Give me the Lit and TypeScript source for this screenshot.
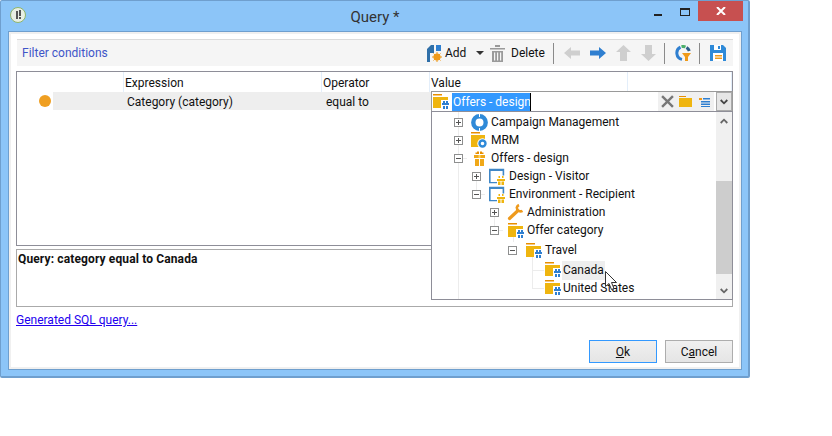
import { LitElement, css, html, svg } from "lit";
import { customElement } from "lit/decorators.js";

const FONT_BLUE = "#2f7fd0";

// Icons ---------------------------------------------------------------

const gift = (x: number, y: number, c = "#2f7fd0") => svg`
  <path fill="#fff" d="M${x - 1} ${y - 1}h9v10h-9z" />
  <path fill=${c} d="M${x} ${y + 2}h7v2h-7zM${x + 1} ${y + 5}h2v3h-2zM${x + 4} ${y + 5}h2v3h-2zM${x + 1} ${y}h2v2h-2zM${x + 4} ${y}h2v2h-2z" />
`;

const folderIcon = svg`<svg class="ico folder" viewBox="0 0 17 16" width="17" height="16">
  <path fill="#e88f00" d="M0 0h9v1.500H0z" />
  <path fill="#efb50f" d="M0 3h15v11H0z" />
  ${gift(9, 7)}
</svg>`;

const icons: Record<string, unknown> = {
  campaign: svg`<svg class="ico" viewBox="0 0 17 17" width="17" height="17">
    <circle cx="8.500" cy="8.500" r="6.200" fill="none" stroke="#2f8ad8" stroke-width="4.400" />
    <path stroke="#fff" stroke-width="1" d="M8.500 0v3M8.500 14v3" />
  </svg>`,
  mrm: svg`<svg class="ico" viewBox="0 0 17 17" width="17" height="17">
    <path fill="#e88f00" d="M0 0h9v1.500H0z" />
    <path fill="#efb50f" d="M0 3h14v12H0z" />
    <circle cx="11.500" cy="11.500" r="5.200" fill="#fff" />
    <circle cx="11.500" cy="11.500" r="3" fill="none" stroke="#2f8ad8" stroke-width="2.400" />
  </svg>`,
  gift: svg`<svg class="ico" viewBox="0 0 17 17" width="17" height="17">
    <path fill="#f0a818" d="M3 5h11v3H3zM4 9h4v7H4zM9 9h4v7H9z" />
    <path fill="#e88f00" d="M6 1.500h2V4H6zM9 1.500h2V4H9zM4.500 2.500H7V4H4.500zM10 2.500h2.500V4H10z" />
    <path fill="#ffd766" d="M7.500 5h2v3h-2z" />
  </svg>`,
  screen: svg`<svg class="ico" viewBox="0 0 17 17" width="17" height="17">
    <path fill="none" stroke="#3f87c7" stroke-width="1.600" d="M.8 14.400V1.600h13.600v6" />
    <path fill="#3f87c7" d="M0 1h15v2H0zM0 14h8v1.300H0z" />
    <path fill="#efb50f" d="M8 11h8v2H8zM9 13.500h2.500V17H9zM12.500 13.500H15V17h-2.500zM9.500 8H11v2H9.500zM13 8h1.500v2H13z" />
  </svg>`,
  wrench: svg`<svg class="ico" viewBox="0 0 18 17" width="18" height="17">
    <path fill="none" stroke="#ee9a1d" stroke-width="3.200" stroke-linecap="round" d="M2.500 14.500 L10.500 7" />
    <path fill="none" stroke="#ee9a1d" stroke-width="2.600" d="M15.500 6.800A3.800 3.800 0 0 1 9.800 3.500 3.800 3.800 0 0 1 12 1" />
  </svg>`,
  folder: folderIcon,
};

// Data ----------------------------------------------------------------

interface TreeRow {
  label: string;
  level: number;
  icon: string;
  toggle?: "plus" | "minus";
  height?: number;
  selected?: boolean;
}

const TREE: TreeRow[] = [
  { label: "Campaign Management", level: 0, icon: "campaign", toggle: "plus" },
  { label: "MRM", level: 0, icon: "mrm", toggle: "plus" },
  { label: "Offers - design", level: 0, icon: "gift", toggle: "minus" },
  { label: "Design - Visitor", level: 1, icon: "screen", toggle: "plus" },
  { label: "Environment - Recipient", level: 1, icon: "screen", toggle: "minus" },
  { label: "Administration", level: 2, icon: "wrench", toggle: "plus" },
  { label: "Offer category", level: 2, icon: "folder", toggle: "minus", height: 19 },
  { label: "Travel", level: 3, icon: "folder", toggle: "minus", height: 21 },
  { label: "Canada", level: 4, icon: "folder", selected: true },
  { label: "United States", level: 4, icon: "folder" },
];

// guide lines of the tree: x, y, width, height relative to the list
const GUIDES = [
  [26, 0, 1, 187],
  [44, 60, 1, 24],
  [62, 96, 1, 24],
  [81, 124, 1, 6],
  [100, 140, 1, 36],
  [100, 158, 12, 1],
  [100, 176, 12, 1],
  [31, 46, 4, 1],
  [49, 82, 4, 1],
  [67, 118, 4, 1],
];

@customElement("app-root")
export class AppRoot extends LitElement {
  render() {
    return html`
      <div class="window">
        <div class="titlebar">
          <span class="app-icon">
            <svg viewBox="0 0 16 16" width="16" height="16">
              <circle cx="8" cy="8" r="7.500" fill="#e8efe4" stroke="#8fb56a" />
              <path fill="#555" d="M6 4h2v8H6zM9 3h2v6H9zM9 10h2v2H9z" />
            </svg>
          </span>
          <span class="title">Query *</span>
          <span class="win-min"></span>
          <span class="win-max"></span>
          <span class="win-close">
            <svg viewBox="0 0 10 8" width="10" height="8">
              <path stroke="#fff" stroke-width="2" d="M1 0l8 8M9 0L1 8" />
            </svg>
          </span>
        </div>
        <div class="client">
          ${this.renderToolbar()}
          ${this.renderTable()}
          <div class="query">Query: category equal to Canada</div>
          <a class="sql">Generated SQL query...</a>
          <div class="buttons">
            <button class="default"><u>O</u>k</button>
            <button>C<u>a</u>ncel</button>
          </div>
        </div>
      </div>
    `;
  }

  renderToolbar() {
    return html`
      <div class="toolbar">
        <span class="filter">Filter conditions</span>
        <span class="tools">
          <svg class="t-add" viewBox="0 0 15 17" width="15" height="17">
            <path fill="#2f6fa8" d="M0 4l4-4h3v8H3v9H0z" />
            <path fill="#2f7fd0" d="M9 0h5v6H9z" />
            <circle cx="10" cy="12" r="3.600" fill="#ef9a1a" />
            <path stroke="#ef9a1a" stroke-width="1" d="M10 7v10M5 12h10M6.500 8.500l7 7M13.500 8.500l-7 7" />
          </svg>
          <span class="t-label add-label">Add</span>
          <span class="caret"></span>
          <svg class="t-trash" viewBox="0 0 15 17" width="15" height="17">
            <path fill="#9a9a9a" d="M0 3h15v1.500H0zM5 0h5v2H5zM2 6h11v11H2z" />
            <path fill="#f5f5f5" d="M4 7.500h1.200v8H4zM7 7.500h1.200v8H7zM10 7.500h1.200v8H10z" />
          </svg>
          <span class="t-label delete-label">Delete</span>
          <span class="sep s1"></span>
          <svg class="t-arrow" viewBox="0 0 16 12" width="16" height="12"><path fill="#cfcfcf" d="M7 0v3.500h9v5H7V12L0 6z" /></svg>
          <svg class="t-arrow" viewBox="0 0 16 12" width="16" height="12"><path fill=${FONT_BLUE} d="M9 0v3.500H0v5h9V12l7-6z" /></svg>
          <svg class="t-arrow" viewBox="0 0 15 16" width="15" height="16"><path fill="#cfcfcf" d="M7.500 0L15 7h-4v9H4V7H0z" /></svg>
          <svg class="t-arrow" viewBox="0 0 15 16" width="15" height="16"><path fill="#cfcfcf" d="M7.500 16L15 9h-4V0H4v9H0z" /></svg>
          <span class="sep s2"></span>
          <svg class="t-chart" viewBox="0 0 16 16" width="16" height="16">
            <path fill="none" stroke="#2f7fd0" stroke-width="3" d="M5.500 2.200A6.500 6.500 0 0 0 7 14.400" />
            <path fill="none" stroke="#4caf6a" stroke-width="3" d="M6.500 1.600a6.500 6.500 0 0 1 4 .4" />
            <path fill="none" stroke="#2c5d8a" stroke-width="3" d="M11.500 2.500a6.500 6.500 0 0 1 2.800 3.500" />
            <path fill="#ef9a1a" d="M7 8h9l-3 4v4h-3v-4z" />
          </svg>
          <span class="sep s3"></span>
          <svg class="t-save" viewBox="0 0 16 16" width="16" height="16">
            <path fill="#2f8ad8" d="M0 0h13l3 3v13H0z" />
            <path fill="#fff" d="M4 0h7v5H4z" />
            <path fill="#2f8ad8" d="M8 1h2v3H8z" />
            <path fill="#fff" d="M3 8h10v8H3z" />
            <path fill="#ef9a1a" d="M5 10h7v1.500H5zM5 12.500h7V14H5z" />
          </svg>
        </span>
      </div>
    `;
  }

  renderTable() {
    return html`
      <div class="table">
        <div class="head">
          <span class="c0"></span>
          <span class="c1">Expression</span>
          <span class="c2">Operator</span>
          <span class="c3">Value</span>
          <span class="c4"></span>
        </div>
        <div class="row">
          <span class="dot"></span>
          <span class="cell expr">Category (category)</span>
          <span class="cell op">equal to</span>
        </div>
        ${this.renderCombo()}
      </div>
    `;
  }

  renderCombo() {
    return html`
      <div class="combo">
        <span class="combo-icon">${folderIcon}</span>
        <span class="input"><span class="sel">Offers - design</span></span>
        <span class="combo-tools">
          <svg viewBox="0 0 12 12" width="13" height="13"><path stroke="#777" stroke-width="2.200" d="M1 1l10 10M11 1L1 11" /></svg>
          <svg viewBox="0 0 13 11" width="13" height="11"><path fill="#e88f00" d="M0 0h7v1H0z" /><path fill="#efb50f" d="M0 2h13v9H0z" /></svg>
          <svg class="list-ico" viewBox="0 0 11 10" width="11" height="10"><path fill="#ef9a1a" d="M0 1h3v2H0z" /><path fill="#2f7fd0" d="M4 1h7v1.500H4zM2 4h9v1.500H2zM2 6.500h9V8H2zM2 9h9v1H2z" /></svg>
        </span>
        <span class="drop">
          <svg viewBox="0 0 8 6" width="8" height="6"><path fill="none" stroke="#444" stroke-width="1.800" d="M.7 1l3.300 3.300L7.300 1" /></svg>
        </span>
      </div>
      <div class="popup">
        <div class="list">
          ${GUIDES.map(
            ([x, y, w, h]) =>
              html`<i class="guide" style="left:${x}px;top:${y}px;width:${w}px;height:${h}px"></i>`,
          )}
          ${TREE.map(
            (r) => html`
              <div
                class="node ${r.toggle ? "" : "leaf"}"
                style="padding-left:${22 + r.level * 18}px;height:${r.height ?? 18}px"
              >
                <span class="toggle">
                  ${r.toggle
                    ? html`<span class="box">
                        <svg viewBox="0 0 7 7" width="7" height="7">
                          <path fill="#555" d="M1 3h5v1H1z" />
                          ${r.toggle === "plus" ? svg`<path fill="#555" d="M3 1h1v5H3z" />` : ""}
                        </svg>
                      </span>`
                    : ""}
                </span>
                <span class="node-icon">${icons[r.icon]}</span>
                <span class="label ${r.selected ? "hover" : ""}">${r.label}</span>
              </div>
            `,
          )}
        </div>
        <div class="scroll">
          <span class="up">
            <svg viewBox="0 0 8 6" width="8" height="6"><path fill="none" stroke="#666" stroke-width="1.800" d="M.7 5L4 1.700 7.300 5" /></svg>
          </span>
          <span class="track"></span>
          <span class="thumb"></span>
          <span class="down">
            <svg viewBox="0 0 8 6" width="8" height="6"><path fill="none" stroke="#666" stroke-width="1.800" d="M.7 1L4 4.300 7.300 1" /></svg>
          </span>
        </div>
        <svg class="cursor" viewBox="0 0 13 20" width="13" height="20">
          <path fill="#fff" stroke="#333" d="M.5.500v15l3.500-3 2.500 6 2.500-1-2.500-6h5z" />
        </svg>
      </div>
    `;
  }

  // Templates ---------------------------------------------------------------

  static styles = css`
    :host {
      display: block;
      width: 832px;
      height: 436px;
      background: #fff;
      font-family: "Roboto", "Noto Sans", sans-serif;
      font-size: 12px;
      color: #111;
    }

    .window {
      width: 750px;
      height: 378px;
      box-sizing: border-box;
      display: flex;
      flex-direction: column;
      background: #8cc5f8;
      border: 1px solid #6f9fce;
      border-right-width: 2px;
      border-bottom-width: 2px;
      border-radius: 2px;
      padding: 0 6px 6px 7px;
    }

    .titlebar {
      height: 30px;
      flex: none;
      position: relative;
      display: flex;
      justify-content: center;
      align-items: center;
    }
    .title {
      font-size: 15px;
      color: #333;
      margin-top: 1px;
    }
    .app-icon {
      position: absolute;
      left: 2px;
      top: 6px;
      height: 16px;
    }
    .win-min {
      position: absolute;
      left: 646px;
      top: 13px;
      width: 8px;
      height: 2px;
      background: #222;
    }
    .win-max {
      position: absolute;
      left: 672px;
      top: 7px;
      width: 8px;
      height: 5px;
      border: 1px solid #222;
      border-top-width: 2px;
    }
    .win-close {
      position: absolute;
      left: 690px;
      top: 0;
      width: 45px;
      height: 20px;
      background: #c75050;
      display: flex;
      align-items: center;
      justify-content: center;
    }

    .client {
      flex: 1;
      min-height: 0;
      background: #fff;
      border: 1px solid #6f9fce;
      box-shadow: inset 0 0 0 2px #f0f0f0;
      padding: 7px 8px 0 7px;
      display: flex;
      flex-direction: column;
    }

    .toolbar {
      height: 26px;
      flex: none;
      margin-left: 1px;
      background: #f5f5f5;
      border-top: 1px solid #dcdcdc;
      display: flex;
      align-items: center;
      justify-content: space-between;
      padding-left: 5px;
    }
    .filter {
      color: #3f55c8;
    }
    .tools {
      display: flex;
      align-items: center;
    }
    .t-add {
      margin-right: 3px;
    }
    .add-label {
      width: 31px;
    }
    .caret {
      width: 0;
      height: 0;
      border: 4px solid transparent;
      border-top: 4px solid #333;
      border-bottom: 0;
      margin-right: 6px;
    }
    .t-trash {
      margin-right: 6px;
    }
    .delete-label {
      width: 42px;
    }
    .sep {
      width: 1px;
      height: 21px;
      background: #8a8a8a;
    }
    .s1 {
      margin-right: 10px;
    }
    .t-arrow {
      margin-right: 10px;
    }
    .s2 {
      margin: 0 10px 0 -2px;
    }
    .t-chart {
      margin-right: 8px;
    }
    .s3 {
      margin-right: 10px;
    }
    .t-save {
      margin-right: 7px;
    }

    .table {
      height: 175px;
      flex: none;
      margin-top: 5px;
      position: relative;
      border: 1px solid #8e8e98;
      box-sizing: border-box;
    }
    .head {
      height: 20px;
      display: grid;
      grid-template-columns: 107px 198px 108px 198px 1fr;
      line-height: 22px;
    }
    .head span {
      border-right: 1px solid #e3eefa;
      padding-left: 1px;
    }
    .row {
      height: 18px;
      display: flex;
      align-items: center;
      line-height: 20px;
    }
    .dot {
      width: 12px;
      height: 12px;
      flex: none;
      border-radius: 50%;
      background: #ef9f22;
      margin: 0 2px 0 22px;
    }
    .cell {
      background: #eee;
      height: 18px;
    }
    .expr {
      width: 198px;
      padding-left: 74px;
      box-sizing: content-box;
    }
    .op {
      width: 106px;
      padding-left: 1px;
    }

    .combo {
      position: absolute;
      left: 414px;
      top: 19px;
      width: 302px;
      height: 21px;
      box-sizing: border-box;
      border: 1px solid #9a9a9a;
      background: #fff;
      display: flex;
      align-items: center;
      padding-left: 1px;
    }
    .combo-icon {
      height: 16px;
      margin-right: 2px;
      flex: none;
    }
    .ico {
      display: block;
    }
    .input {
      flex: 1;
      display: flex;
      height: 18px;
      line-height: 19px;
    }
    .sel {
      background: #3399ff;
      color: #fff;
      border-right: 1px solid #000;
      padding-left: 1px;
      width: 77px;
      white-space: nowrap;
      overflow: hidden;
    }
    .combo-tools {
      display: flex;
      align-items: center;
      gap: 5px;
      background: #f0f0f0;
      height: 19px;
      padding: 0 4px 0 3px;
      margin-right: 2px;
    }
    .list-ico {
      margin-left: 2px;
    }
    .drop {
      width: 16px;
      height: 19px;
      box-sizing: border-box;
      border: 1px solid #aaa;
      background: #e6e6e6;
      display: flex;
      align-items: center;
      justify-content: center;
      flex: none;
    }

    .popup {
      position: absolute;
      left: 414px;
      top: 39px;
      width: 302px;
      height: 189px;
      box-sizing: border-box;
      border: 1px solid #8e8e98;
      background: #fff;
      display: flex;
    }
    .list {
      flex: 1;
      position: relative;
      padding-top: 1px;
    }
    .guide {
      position: absolute;
      background: #ececec;
    }
    .node {
      position: relative;
      display: flex;
      align-items: center;
      box-sizing: border-box;
    }
    .toggle {
      width: 9px;
      height: 9px;
      flex: none;
      margin-right: 8px;
    }
    .box {
      display: flex;
      width: 9px;
      height: 9px;
      box-sizing: border-box;
      border: 1px solid #8e8f8f;
      background: #fff;
    }
    .box svg {
      display: block;
    }
    .node-icon {
      width: 19px;
      flex: none;
      display: flex;
      align-items: center;
    }
    .node-icon .folder {
      margin-left: 1px;
      flex: none;
    }
    .leaf .node-icon .folder {
      margin-left: 2px;
    }
    .label {
      padding: 0 1px;
      line-height: 19px;
    }
    .label.hover {
      background: #eee;
    }

    .scroll {
      width: 16px;
      flex: none;
      background: #f0f0f0;
      display: flex;
      flex-direction: column;
      position: relative;
    }
    .up,
    .down {
      height: 17px;
      flex: none;
      display: flex;
      align-items: center;
      justify-content: center;
    }
    .track {
      flex: 1;
    }
    .thumb {
      position: absolute;
      left: 0;
      right: 0;
      top: 69px;
      height: 93px;
      background: #cdcdcd;
    }
    .cursor {
      position: absolute;
      left: 173px;
      top: 159px;
    }

    .query {
      height: 58px;
      flex: none;
      box-sizing: border-box;
      margin-top: 3px;
      border: 1px solid #aaa;
      padding: 2px 1px;
      font-weight: 700;
      letter-spacing: 0.13px;
    }
    .sql {
      margin-top: 6px;
      align-self: flex-start;
      color: #2200ee;
      text-decoration: underline;
    }
    .buttons {
      display: flex;
      justify-content: flex-end;
      gap: 8px;
      margin-top: 13px;
    }
    button {
      width: 68px;
      height: 23px;
      box-sizing: border-box;
      border: 1px solid #adadad;
      background: linear-gradient(#f0f0f0, #e5e5e5);
      font: inherit;
      color: #111;
      padding: 0;
    }
    button.default {
      border-color: #3399ff;
    }
  `;
}

declare global {
  interface HTMLElementTagNameMap {
    "app-root": AppRoot;
  }
}
